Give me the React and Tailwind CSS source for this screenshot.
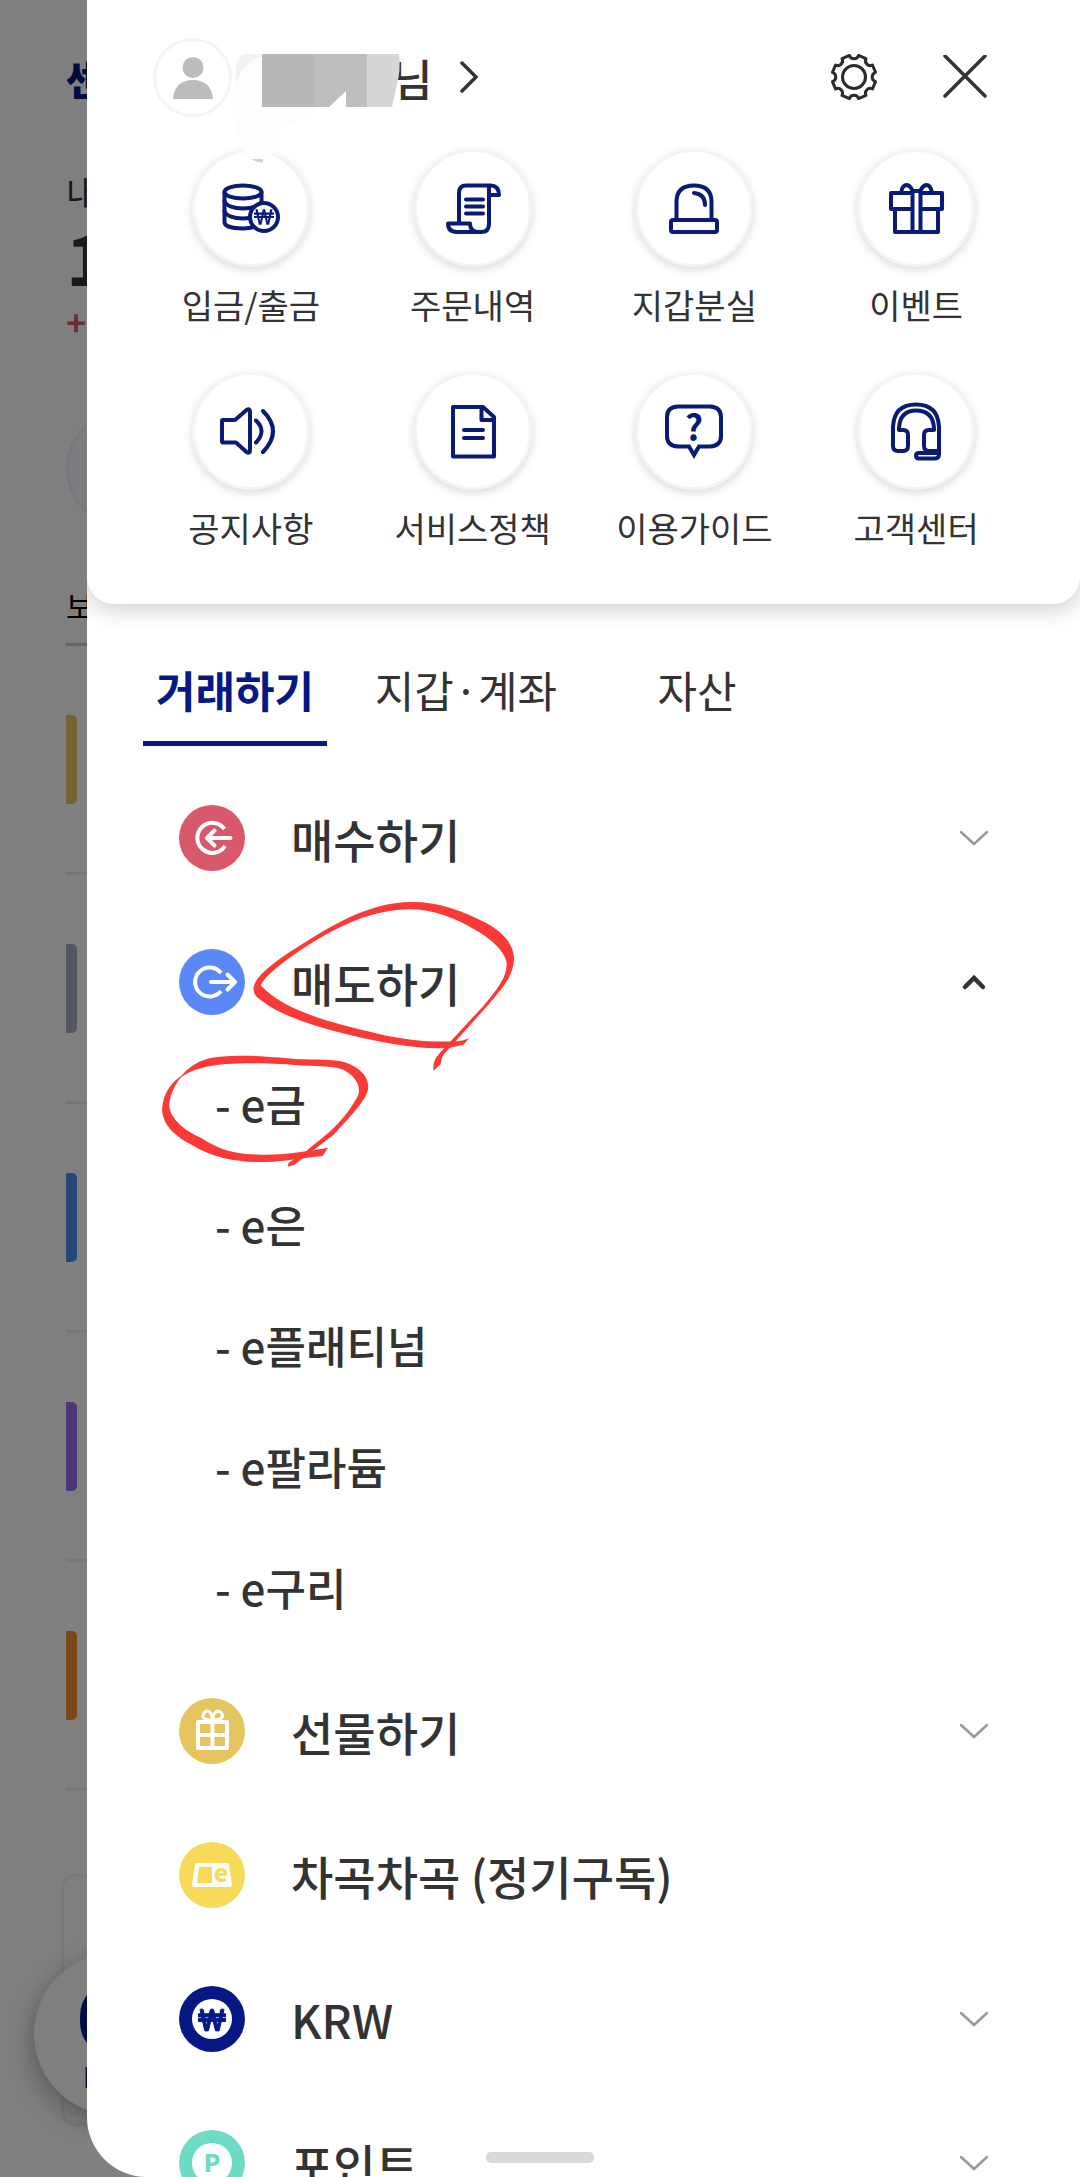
import React, { useState } from 'react';
import { FaWonSign } from 'react-icons/fa';

const holdings = [
  'bg-[#eac866]',
  'bg-[#a8afbf]',
  'bg-[#4c8ef0]',
  'bg-[#986af0]',
  'bg-[#f49032]',
];

// Outlined shortcut icons share one stroke style
const LineIcon = ({ children }) => (
  <svg
    viewBox="0 0 56 56"
    className="w-[56px] h-[56px] overflow-visible"
    fill="none"
    stroke="#0a1a75"
    strokeWidth="4"
    strokeLinecap="round"
    strokeLinejoin="round"
    aria-hidden="true"
  >
    {children}
  </svg>
);

const CoinsIcon = () => (
  <LineIcon>
    <ellipse cx="20" cy="12" rx="18.5" ry="6.5" />
    <path d="M1.5 12V42C1.5 46 9 48.5 20 48.5C24 48.5 26 48 29 47.5M38.5 12V24" />
    <path d="M1.5 21C3 26 11 28.5 20 28.5C26 28.5 32 27 36 25M1.5 31C3 36 11 38.5 20 38.5L27 38" />
    <circle cx="41" cy="37" r="14" fill="#fff" />
    <FaWonSign x="31" y="27" size="20" color="#0a1a75" stroke="none" />
  </LineIcon>
);

const OrderIcon = () => (
  <LineIcon>
    <path d="M14 43V13Q14 5.500 21 5.500H46Q54 6 54 15H44" />
    <path d="M44 6V44Q44 52 36 52H12Q3 52 3 43.500H25Q25 52 33 52" />
    <path d="M21 19.500H38M21 26.500H38M21 33.500H38" />
  </LineIcon>
);

const SirenIcon = () => (
  <LineIcon>
    <path d="M10.500 39V22Q10.500 5.500 28 5.500Q45.500 5.500 45.500 22V39" />
    <rect x="5" y="40" width="46" height="12" rx="2" />
    <path d="M28 13Q39 14 39 25" />
  </LineIcon>
);

const GiftIcon = () => (
  <LineIcon>
    <rect x="3" y="13" width="51" height="16" />
    <path d="M7 29V52H50V29" />
    <path d="M24.500 11H32.500V52H24.500Z" fill="#fff" />
    <path d="M13 13Q14 5 19 5Q23 6 25 12M32 12Q34 6 38 5Q43 5 44 13" />
  </LineIcon>
);

const SpeakerIcon = () => (
  <LineIcon>
    <path d="M-1 18Q-1 17 0 17H12L23.500 7Q27 5 27 9V47Q27 51 23.500 49L13 39.500H0Q-1 39.500 -1 38Z" />
    <path d="M33 17.500Q44 28 33 39.500M40 8Q60 28 40 49" />
  </LineIcon>
);

const DocIcon = () => (
  <LineIcon>
    <path d="M8 4H38L49 14V53.500H8Z" />
    <path d="M36.500 4V17H49" />
    <path d="M19 27H38M19 35H38" />
  </LineIcon>
);

const GuideIcon = () => (
  <LineIcon>
    <path d="M12 3.500H44Q55 4 55 14V33Q55 43 44 43.500H33L28 52L23 43.500H12Q1 43 1 33V14Q1 4 12 3.500Z" strokeLinejoin="miter" />
    <text x="28" y="38" textAnchor="middle" fontSize="35" fontWeight="700" fill="#0a1a75" stroke="none">?</text>
  </LineIcon>
);

const HeadsetIcon = () => (
  <LineIcon>
    <path d="M5 25V43Q5 48 10 48H15Q20 48 20 43V32Q20 27 15 27H11V25Q12 7.500 28 7.500Q45 7.500 46 25V27H41Q36 27 36 32V43Q36 48 41 48H50" />
    <path d="M5 26V24Q6 1.500 28 1.500Q50 1.500 51 24V51Q51 55.500 47 55.500H31Q28 55.500 28 52.500Q28 50 31 50H49" />
  </LineIcon>
);

const shortcuts = [
  { label: '입금/출금', Icon: CoinsIcon },
  { label: '주문내역', Icon: OrderIcon },
  { label: '지갑분실', Icon: SirenIcon },
  { label: '이벤트', Icon: GiftIcon },
  { label: '공지사항', Icon: SpeakerIcon },
  { label: '서비스정책', Icon: DocIcon },
  { label: '이용가이드', Icon: GuideIcon },
  { label: '고객센터', Icon: HeadsetIcon },
];

const RoundIcon = ({ color, children }) => (
  <svg viewBox="0 0 66 66" className="w-[66px] h-[66px] shrink-0" fill="none" strokeLinecap="round" strokeLinejoin="round" aria-hidden="true">
    <circle cx="33" cy="33" r="33" fill={color} />
    {children}
  </svg>
);

const BuyIcon = () => (
  <RoundIcon color="#d9596c">
    <g stroke="#fff" strokeWidth="4">
      <path d="M45.500 24A15 15 0 1 0 46 41" strokeLinecap="butt" />
      <path d="M51.500 33H28M35.500 25.500L28 33L35.500 40.500" />
    </g>
  </RoundIcon>
);

const SellIcon = () => (
  <RoundIcon color="#5a88f7">
    <g stroke="#fff" strokeWidth="4">
      <path d="M42 24A14.500 14.500 0 1 0 42 42" strokeLinecap="butt" />
      <path d="M32 33H56M48.500 25.500L56 33L48.500 40.500" />
    </g>
  </RoundIcon>
);

const PresentIcon = () => (
  <RoundIcon color="#e6c561">
    <g stroke="#fff" strokeWidth="4">
      <rect x="19" y="24" width="29" height="26" />
      <path d="M33.500 24V50M19 37H48" />
      <path d="M33.500 22C26 22 23 20 24 17C26 12 30 12 31.500 15Q33 18 33.500 22C34 18 34.500 16 36 14.500C39 12 42 13 43.500 17C44 20 41 22 33.500 22Z" strokeWidth="3" />
    </g>
  </RoundIcon>
);

const SubscribeIcon = () => (
  <RoundIcon color="#f8da5b">
    <path d="M18 23H48L51 43H15Z" fill="#fff" stroke="#fff" strokeWidth="4" />
    <path d="M20 25H33V41H18Z" fill="#f8da5b" />
    <text x="42" y="40" textAnchor="middle" fontSize="24" fontWeight="900" fill="#f8da5b">e</text>
  </RoundIcon>
);

const KrwIcon = () => (
  <RoundIcon color="#061885">
    <circle cx="33" cy="33" r="20" fill="#fff" />
    <FaWonSign x="19" y="20" size="28" color="#061885" stroke="#061885" strokeWidth="20" />
  </RoundIcon>
);

const PointIcon = () => (
  <RoundIcon color="#6ddbc5">
    <circle cx="33" cy="33" r="20" fill="#fff" />
    <text x="33" y="42" textAnchor="middle" fontSize="24" fontWeight="900" fill="#6ddbc5">P</text>
  </RoundIcon>
);

const menu = [
  { label: '매수하기', Icon: BuyIcon, children: [] },
  { label: '매도하기', Icon: SellIcon, children: ['e금', 'e은', 'e플래티넘', 'e팔라듐', 'e구리'] },
  { label: '선물하기', Icon: PresentIcon, children: [] },
  { label: '차곡차곡 (정기구독)', Icon: SubscribeIcon },
  { label: 'KRW', Icon: KrwIcon, children: [] },
  { label: '포인트', Icon: PointIcon, children: [] },
];

const tabs = ['거래하기', '지갑·계좌', '자산'];

// Gear outline: eight teeth separated by round notches
const gearPoint = (deg, r) => {
  const a = (deg * Math.PI) / 180;
  return `${(26 + r * Math.cos(a)).toFixed(2)} ${(26 + r * Math.sin(a)).toFixed(2)}`;
};
const gearPath =
  [0, 45, 90, 135, 180, 225, 270, 315]
    .map((a, i) => `${i ? 'L' : 'M'}${gearPoint(a - 12, 22)}A4.8 4.8 0 0 0 ${gearPoint(a + 12, 22)}`)
    .join('') + 'Z';

const Chevron = ({ open }) => (
  <svg viewBox="0 0 30 18" className="w-[30px] h-[18px] shrink-0" fill="none" strokeLinecap="round" aria-hidden="true">
    {open ? (
      <path d="M6 14L15 5L24 14" stroke="#333" strokeWidth="4.500" />
    ) : (
      <path d="M2 3L15 15L28 3" stroke="#999" strokeWidth="2.500" />
    )}
  </svg>
);

// Account page that stays visible beside the drawer
const PageBehind = () => (
  <div className="relative w-[87px] shrink-0 overflow-hidden whitespace-nowrap bg-white" aria-hidden="true">
    <div className="pl-[66px]">
      <div className="h-[156px] flex items-center text-[40px] leading-[48px] font-black text-[#061885]">센</div>
      <div className="h-[72px] flex items-center text-[34px] leading-[40px] text-[#333]">내</div>
      <div className="h-[56px] flex items-center text-[70px] leading-[56px] font-bold text-[#333]">1</div>
      <div className="h-[76px] flex items-center text-[34px] leading-[40px] font-bold text-[#d9596c]">+</div>
      <div className="mt-[50px] w-[118px] h-[118px] rounded-full bg-[#f4f8ff] border-3 border-[#eef1f6]" />
      <div className="mt-[38px] h-[80px] flex items-center border-b-3 border-[#ccc] text-[30px] leading-[40px] text-black">보</div>
      {holdings.map((color) => (
        <div key={color} className="h-[229px] flex items-center border-b-3 border-[#eee]">
          <div className={`w-[11px] h-[89px] rounded-r-[5px] ${color}`} />
        </div>
      ))}
    </div>
    <div className="ml-[61px] mt-[83px] w-[200px] h-[252px] rounded-[14px] border-3 border-[#f0f2f4]" />
    {/* Floating button */}
    <div className="absolute left-[34px] bottom-[62px] w-[162px] h-[162px] pt-[28px] flex flex-col items-center rounded-full bg-white shadow-[0_8px_28px_rgba(0,0,0,0.35)]">
      <div className="w-[70px] h-[76px] rounded-full bg-[#061885]" />
      <span className="text-[28px] leading-[38px] font-bold text-[#061885]">KRW</span>
    </div>
    <div className="absolute inset-0 bg-black/50" />
  </div>
);

const App = () => {
  const [tab, setTab] = useState('거래하기');
  const [openItem, setOpenItem] = useState('매도하기');

  return (
    <div className="relative h-screen flex overflow-hidden bg-[#808080] font-['Noto_Sans_CJK_KR',sans-serif] text-[#333]">
      <PageBehind />

      {/* Drawer */}
      <div className="relative flex-1 min-w-0 overflow-hidden rounded-bl-[60px] bg-white">
        <header className="rounded-b-[27px] pt-[38px] pb-[54px] shadow-[0_4px_24px_rgba(0,0,0,0.22)]">
          <div className="flex items-center h-[79px] pl-[66px] pr-[92px]">
            <div className="w-[79px] h-[79px] shrink-0 rounded-full border-3 border-[#f4f4f4] flex items-center justify-center">
              <svg viewBox="0 0 40 42" className="w-[40px] h-[42px]" fill="#bcbcbc" aria-hidden="true">
                <circle cx="20" cy="10.500" r="10.500" />
                <path d="M0 42Q2 23 20 23Q38 23 40 42Z" />
              </svg>
            </div>
            <button type="button" className="flex items-center ml-1 text-[44px] leading-[60px] font-medium">
              {/* Masked user name */}
              <svg viewBox="0 -3 156 54" className="relative z-10 w-[156px] h-[54px] shrink-0 overflow-visible" aria-hidden="true">
                <path d="M8 0H26V53H0V12Q2 2 8 0Z" fill="#f2f2f2" />
                <path d="M26 3C8 5 -4 28 -3 56C-2 84 10 106 24 108C36 106 45 88 46 72C62 68 78 64 80 53H26Z" fill="#fdfdfd" />
                <path d="M26 0H79V53H26Z" fill="#b8b8b8" />
                <path d="M79 0H131V53H79Z" fill="#bebebe" />
                <path d="M131 0H163Q165 16 161 30L156 53H131Z" fill="#d6d6d6" />
                <path d="M93 53L110 37V53Z" fill="#fff" />
                <path d="M16 105H27V108Q20 109 16 105Z" fill="#cdd2e2" />
              </svg>
              <span>님</span>
              <svg viewBox="0 0 18 34" className="ml-7 w-[18px] h-[34px]" fill="none" stroke="#333" strokeWidth="3.500" strokeLinecap="round" aria-hidden="true">
                <path d="M2 2L16 16L2 30" />
              </svg>
            </button>
            <button type="button" aria-label="설정" className="ml-auto">
              <svg viewBox="0 1 52 52" className="w-[52px] h-[52px]" fill="none" stroke="#2b2b2b" strokeWidth="3" strokeLinejoin="round" aria-hidden="true">
                <path d={gearPath} />
                <circle cx="26" cy="26" r="11.500" />
              </svg>
            </button>
            <button type="button" aria-label="닫기" className="ml-[62px]">
              <svg viewBox="0 1 46 46" className="w-[46px] h-[46px]" fill="none" stroke="#333" strokeWidth="3.500" strokeLinecap="round" aria-hidden="true">
                <path d="M3 2L43 42M43 2L3 42" />
              </svg>
            </button>
          </div>

          <div className="grid grid-cols-4 gap-y-[45px] mt-8 px-[53px]">
            {shortcuts.map(({ label, Icon }) => (
              <a key={label} href="#" className="flex flex-col items-center">
                <span className="w-[118px] h-[118px] flex items-center justify-center rounded-full border-3 border-[#f4f4f4] bg-white shadow-[0_3px_10px_rgba(0,0,0,0.15)]">
                  <Icon />
                </span>
                <span className="mt-4 text-[34px] leading-[44px] whitespace-nowrap">{label}</span>
              </a>
            ))}
          </div>
        </header>

        <nav className="flex gap-[47px] mt-[34px] pl-[56px]">
          {tabs.map((name) => (
            <button
              key={name}
              type="button"
              onClick={() => setTab(name)}
              className={`w-[184px] h-[108px] border-b-5 text-[43px] whitespace-nowrap ${
                tab === name ? 'border-[#061885] font-bold text-[#061885]' : 'border-transparent'
              }`}
            >
              {name}
            </button>
          ))}
        </nav>

        <ul className="pt-5">
          {menu.map(({ label, Icon, children }) => {
            const open = openItem === label;
            return (
              <li key={label}>
                <button
                  type="button"
                  onClick={() => setOpenItem(open ? '' : label)}
                  className="w-full h-[144px] flex items-center pl-[92px] pr-[91px] text-left"
                >
                  <Icon />
                  <span className="ml-[46px] flex-1 text-[46px] leading-[60px] font-medium whitespace-nowrap">{label}</span>
                  {children && <Chevron open={open} />}
                </button>
                {open && children && (
                  <ul>
                    {children.map((name) => (
                      <li key={name}>
                        <a href="#" className="h-[121px] flex items-center pl-[128px] pb-6 text-[44px] leading-[60px] font-medium">
                          - {name}
                        </a>
                      </li>
                    ))}
                  </ul>
                )}
              </li>
            );
          })}
        </ul>

        {/* Hand-drawn marks */}
        <svg viewBox="0 0 1200 900" className="absolute left-[53px] top-[880px] w-[400px] h-[300px] pointer-events-none" fill="#fb3a38" aria-hidden="true">
          <path d="M340 325C345 290 390 258 440 222C560 145 680 66 815 66C900 66 960 90 1040 130C1095 160 1124 200 1122 240C1118 290 1090 322 1040 380L918 516C903 530 905 540 902 553L880 572C880 545 884 536 900 518L1030 378C1078 322 1100 290 1100 250C1098 220 1060 180 1010 152C940 112 880 88 810 88C700 90 600 130 460 225C420 255 372 290 362 318Z" />
          <path d="M340 325C342 345 350 352 365 362C430 412 530 440 630 465C740 492 850 510 930 503L970 494L988 474C970 482 960 483 945 484C850 488 760 474 690 455C560 425 430 390 362 316Z" />
          <path d="M120 596C140 560 190 532 240 530C330 522 420 534 480 538C560 540 600 538 630 553C672 573 690 600 683 632C675 662 640 700 580 765L462 855L443 860L446 848L500 812C550 770 600 740 650 655C668 625 650 590 610 569C570 555 500 560 440 553C350 547 250 548 200 560C160 570 135 580 120 596Z" />
          <path d="M130 583C90 610 70 640 66 690C70 740 110 772 160 797C230 840 320 850 400 845C450 842 500 832 548 828L564 804C500 812 450 825 370 824C280 825 230 805 180 772C120 745 85 705 88 670C92 640 105 612 130 583Z" />
        </svg>
      </div>

      {/* Home indicator */}
      <div className="absolute bottom-[14px] left-1/2 -translate-x-1/2 w-[108px] h-[11px] rounded-[5px] bg-[#d9d9d9]" />
    </div>
  );
};

export default App;
